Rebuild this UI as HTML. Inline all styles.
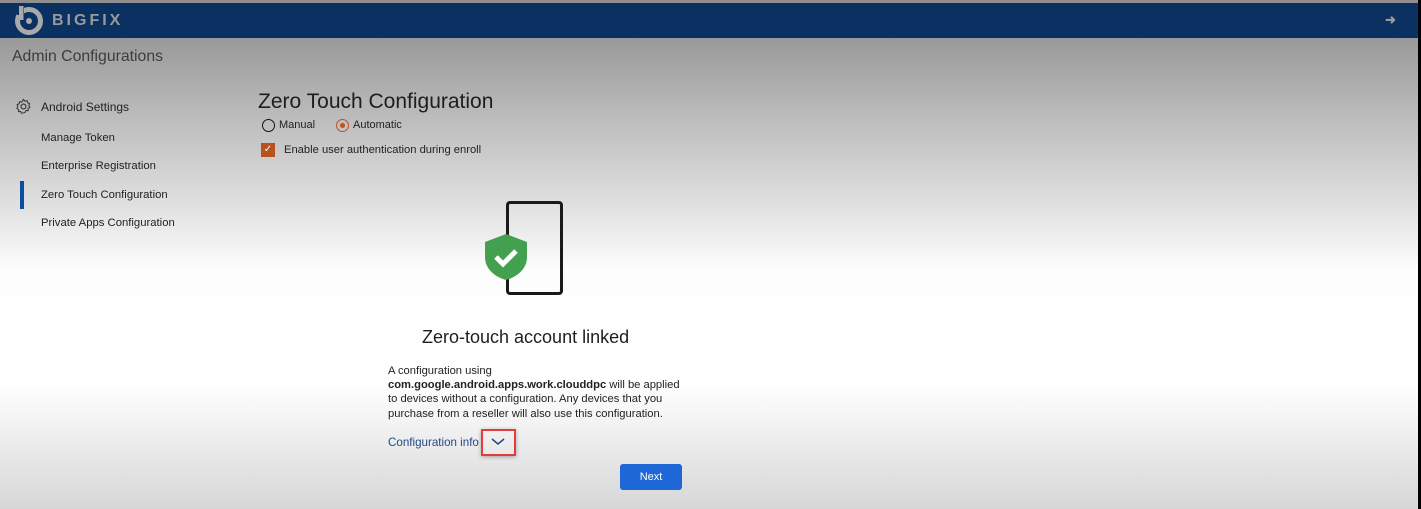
<!DOCTYPE html>
<html><head><meta charset="utf-8"><style>
*{margin:0;padding:0;box-sizing:border-box}
body{width:1421px;height:509px;overflow:hidden;position:relative;font-family:"Liberation Sans",sans-serif;
background:linear-gradient(to bottom,#8f8f8f 0px,#8f8f8f 3px,#0b3162 3px,#0b3162 38px,#999 38px,#bdbdbd 120px,#e2e2e2 210px,#fdfdfd 270px,#fff 380px,#f4f4f4 420px,#d6d6d6 509px)}
.a{position:absolute;white-space:nowrap}
</style></head><body>
<div class="a" style="right:0;top:0;width:3px;height:509px;background:#000"></div>
<svg class="a" style="left:12px;top:5px" width="34" height="32" viewBox="0 0 34 32">
<circle cx="17" cy="16" r="11.5" fill="none" stroke="#a9a9a9" stroke-width="5"/>
<circle cx="17" cy="16" r="3" fill="#a9a9a9"/>
<rect x="5" y="1" width="7" height="9" fill="#0b3162"/>
<rect x="7" y="1" width="4.5" height="14" fill="#a9a9a9"/>
</svg>
<div class="a" style="left:52px;top:12px;font-size:16px;font-weight:bold;letter-spacing:3px;color:#9a9a9a">BIGFIX</div>
<div class="a" style="left:1385px;top:12px;font-size:13px;font-weight:bold;color:#9a9a9a">&#10140;</div>
<div class="a" style="left:12px;top:48px;font-size:15.8px;color:#3d3d3d">Admin Configurations</div>
<svg class="a" style="left:15px;top:98px" width="17" height="17" viewBox="0 0 24 24"><circle cx="12" cy="12" r="3.5" fill="none" stroke="#333" stroke-width="1.6"/><path d="M12 2l2 2.5 3-.8.8 3 2.8 1.3-1 2.8 1.4 2.6-2.6 1.4.2 3-3-.2-1.4 2.6L12 20.9 9.4 21.6 8 19 5 19.2l.2-3L2.6 14.8 4 12.2 3 9.4l2.8-1.3.8-3 3 .8z" fill="none" stroke="#333" stroke-width="1.4"/></svg>
<div class="a" style="left:41px;top:100px;font-size:12px;color:#222">Android Settings</div>
<div class="a" style="left:41px;top:132px;font-size:11.3px;color:#222">Manage Token</div>
<div class="a" style="left:41px;top:160px;font-size:11.3px;color:#222">Enterprise Registration</div>
<div class="a" style="left:20px;top:181px;width:4px;height:28px;background:#0b4fa0"></div>
<div class="a" style="left:41px;top:189px;font-size:11.3px;color:#222">Zero Touch Configuration</div>
<div class="a" style="left:41px;top:217px;font-size:11.3px;color:#222">Private Apps Configuration</div>
<div class="a" style="left:258px;top:90px;font-size:21px;color:#1e1e1e">Zero Touch Configuration</div>
<div class="a" style="left:262px;top:119px;width:13px;height:13px;border:1.5px solid #111;border-radius:50%"></div>
<div class="a" style="left:279px;top:119px;font-size:11px;color:#222">Manual</div>
<div class="a" style="left:336px;top:119px;width:13px;height:13px;border:1.5px solid #c0501c;border-radius:50%"><div style="margin:2.5px;width:5px;height:5px;border-radius:50%;background:#c0501c"></div></div>
<div class="a" style="left:353px;top:119px;font-size:11px;color:#222">Automatic</div>
<div class="a" style="left:261px;top:143px;width:14px;height:14px;background:#b8531f;color:#fff;font-size:10px;text-align:center;line-height:14px">&#10003;</div>
<div class="a" style="left:284px;top:144px;font-size:11.2px;color:#222">Enable user authentication during enroll</div>
<div class="a" style="left:506px;top:201px;width:57px;height:94px;border:3px solid #1a1a1a;border-radius:4px;background:transparent"></div>
<svg class="a" style="left:484px;top:233px" width="44" height="48" viewBox="0 0 44 48"><path d="M22 1 L43 9 V24 C43 36 33 44 22 47 C11 44 1 36 1 24 V9 Z" fill="#43a04f"/><path d="M12 24 L19 31 L32 18" fill="none" stroke="#fff" stroke-width="5"/></svg>
<div class="a" style="left:422px;top:327px;font-size:18px;color:#1e1e1e">Zero-touch account linked</div>
<div class="a" style="left:388px;top:364px;font-size:11.2px;line-height:14.2px;color:#222">A configuration using<br><b>com.google.android.apps.work.clouddpc</b> will be applied<br>to devices without a configuration. Any devices that you<br>purchase from a reseller will also use this configuration.</div>
<div class="a" style="left:388px;top:436px;font-size:11.6px;color:#214a8a">Configuration info</div>
<div class="a" style="left:481px;top:429px;width:35px;height:27px;border:2px solid #e43c3c;box-shadow:0 1px 4px rgba(0,0,0,.3)"></div>
<svg class="a" style="left:491px;top:438px" width="14" height="8"><path d="M1 1 L7 6 L13 1" fill="none" stroke="#214a8a" stroke-width="1.5"/></svg>
<div class="a" style="left:620px;top:464px;width:62px;height:26px;background:#1e67d6;border-radius:3px;color:#fff;font-size:11px;text-align:center;line-height:26px">Next</div>
</body></html>
